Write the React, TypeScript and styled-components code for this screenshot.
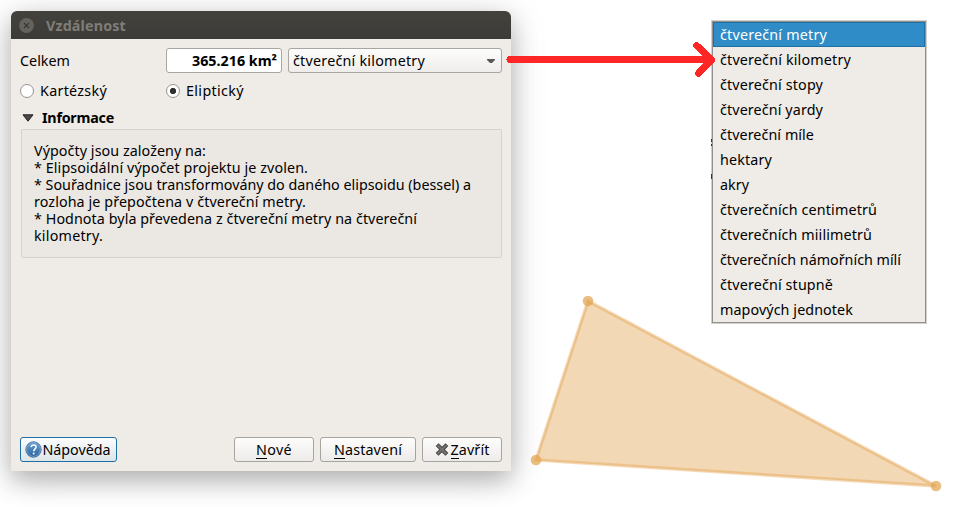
import React, { ReactNode, useLayoutEffect, useRef, useState } from "react";
import styled, { createGlobalStyle, css } from "styled-components";

const GlobalStyle = createGlobalStyle`
  * { box-sizing: border-box; }
  body { margin: 0; background: #fff; }
`;

const Desktop = styled.main`
  position: relative;
  width: 964px;
  height: 507px;
  overflow: hidden;
  background: #fff;
  color: #000;
  font: 14.3px/17px "Noto Sans", "Open Sans", sans-serif;
`;

const TextSpan = styled.span`
  display: inline-block;
  width: max-content;
  white-space: pre;
`;

/* Tracks a run of text so that it occupies the given advance width. */
function Text({ width, children }: { width: number; children: ReactNode }) {
  const ref = useRef<HTMLSpanElement>(null);
  const [spacing, setSpacing] = useState(0);
  useLayoutEffect(() => {
    const el = ref.current;
    if (!el) return;
    const natural = el.getBoundingClientRect().width;
    setSpacing((width - natural) / (el.textContent || " ").length);
  }, [width]);
  return (
    <TextSpan ref={ref} style={{ letterSpacing: spacing }}>
      {children}
    </TextSpan>
  );
}

const Window = styled.section`
  position: absolute;
  left: 11px;
  top: 11px;
  width: 500px;
  height: 460px;
  display: flex;
  flex-direction: column;
  border-radius: 6px 6px 0 0;
  background: #efebe6;
  box-shadow: 0 9px 26px rgba(0, 0, 0, 0.29), 0 4px 46px rgba(0, 0, 0, 0.08);
`;

const TitleBar = styled.header`
  height: 28px;
  display: flex;
  align-items: center;
  gap: 12px;
  padding: 1px 8px 0;
  border-radius: 6px 6px 0 0;
  background: linear-gradient(#43423d, #3c3b37);
  color: #807d78;
  font-weight: 700;

  svg { display: block; }
  span { margin-top: -1px; }
`;

const Body = styled.div`
  flex: 1;
  display: flex;
  flex-direction: column;
  padding: 9px 9px 9px;
`;

const FormRow = styled.div`
  display: grid;
  grid-template-columns: 146px 116px 220px;
  align-items: center;
  height: 25px;
`;

const fieldFrame = css`
  height: 25px;
  display: flex;
  align-items: center;
  border: 1px solid #a9a5a1;
  border-radius: 3px;
`;

const ValueField = styled.div`
  ${fieldFrame}
  justify-content: flex-end;
  padding-right: 4px;
  background: #fff;
  font-weight: 700;
`;

const Combo = styled.div`
  ${fieldFrame}
  width: 214px;
  margin-left: 6px;
  justify-content: space-between;
  padding: 0 6px 0 4px;
  background: linear-gradient(#fdfdfc, #efedeb);
`;

const RadioRow = styled.div`
  display: grid;
  grid-template-columns: 146px 1fr;
  margin-top: 9px;
  height: 17px;
`;

const RadioLabel = styled.div`
  display: flex;
  align-items: center;
  gap: 6px;
`;

const RadioDot = styled.span<{ $on?: boolean }>`
  width: 14px;
  height: 14px;
  border: 1px solid #989490;
  border-radius: 50%;
  background: ${(p) =>
    p.$on ? "radial-gradient(circle, #33312f 0 2.8px, #fff 3.5px)" : "#fff"};
`;

const GroupTitle = styled.div`
  display: flex;
  align-items: center;
  gap: 8px;
  height: 17px;
  margin: 10px 0 3px 2px;
  font-weight: 700;
`;

const GroupBox = styled.div`
  display: flex;
  flex-direction: column;
  height: 129px;
  margin-left: 1px;
  padding: 12px;
  border: 1px solid #d6d2ce;
  border-radius: 2px;
  background: #ebe7e2;
`;

const ButtonBar = styled.footer`
  display: flex;
  gap: 6px;
  margin-top: auto;
`;

const Button = styled.button<{ $width: number; $focused?: boolean }>`
  width: ${(p) => p.$width}px;
  height: 25px;
  display: flex;
  align-items: center;
  justify-content: center;
  gap: 1px;
  padding: 0;
  border: 1px solid ${(p) => (p.$focused ? "#1e6fa5" : "#a7a39f")};
  border-radius: 3px;
  background: ${(p) =>
    p.$focused ? "linear-gradient(#fcfcfc, #dce5e9)" : "linear-gradient(#fdfdfc, #edebe9)"};
  font: inherit;
  color: #000;
  ${(p) => p.$focused && "margin-right: auto; padding-right: 2px;"}
`;

const Mnemonic = styled.span`
  display: inline-block;
  height: 17px;
  line-height: 17px;
  box-shadow: 0 1px 0 #000;
`;

const Menu = styled.ul`
  position: absolute;
  left: 711px;
  top: 20px;
  width: 216px;
  height: 304px;
  margin: 0;
  padding: 0;
  list-style: none;
  border: 1px solid #d2d0cc;
  outline: 1px solid #92908c;
  outline-offset: -2px;
  background: #efebe6;
`;

const MenuItem = styled.li<{ $selected?: boolean }>`
  height: 25px;
  display: flex;
  align-items: center;
  margin: 0 1px;
  padding-left: 7px;

  &:first-child { margin-top: 1px; }

  ${(p) =>
    p.$selected &&
    css`
      background: #308cc6;
      box-shadow: inset 0 0 0 1px #1f71a5;
      color: #fff;
    `}
`;

const Overlay = styled.svg`
  position: absolute;
  inset: 0;
  pointer-events: none;
`;

const infoLines: [string, number][] = [
  ["Výpočty jsou založeny na:", 172],
  ["* Elipsoidální výpočet projektu je zvolen.", 274],
  ["* Souřadnice jsou transformovány do daného elipsoidu (bessel) a", 437],
  ["rozloha je přepočtena v čtvereční metry.", 272],
  ["* Hodnota byla převedena z čtvereční metry na čtvereční", 383],
  ["kilometry.", 69],
];

const units: [string, number][] = [
  ["čtvereční metry", 107],
  ["čtvereční kilometry", 131],
  ["čtvereční stopy", 103],
  ["čtvereční yardy", 103],
  ["čtvereční míle", 94],
  ["hektary", 52],
  ["akry", 29],
  ["čtverečních centimetrů", 157],
  ["čtverečních miilimetrů", 152],
  ["čtverečních námořních mílí", 181],
  ["čtvereční stupně", 113],
  ["mapových jednotek", 133],
];

function CloseIcon() {
  return (
    <svg width="15" height="15" viewBox="0 0 15 15">
      <circle cx="7.5" cy="7.5" r="7.4" fill="#65635e" />
      <path d="M5 5l5 5M10 5l-5 5" stroke="#393834" strokeWidth="1.2" />
    </svg>
  );
}

function HelpIcon() {
  return (
    <svg width="17" height="17" viewBox="0 0 17 17">
      <defs>
        <linearGradient id="help" x2="0" y2="1">
          <stop stopColor="#6aa0d0" />
          <stop offset="1" stopColor="#2c639d" />
        </linearGradient>
      </defs>
      <circle cx="8.5" cy="8.5" r="7.7" fill="url(#help)" stroke="#2a5a8e" strokeWidth=".8" />
      <circle cx="8.5" cy="8.5" r="6.9" fill="none" stroke="#9abedd" strokeWidth=".6" />
      <path d="M6 6.2C6.4 4.5 7.4 4 8.6 4c1.5 0 2.5.9 2.5 2.2 0 1.6-2.4 1.9-2.4 4" fill="none" stroke="#fff" strokeWidth="1.5" />
      <circle cx="8.7" cy="12.4" r="1" fill="#fff" />
    </svg>
  );
}

function CrossIcon() {
  return (
    <svg width="15" height="16" viewBox="0 0 15 16">
      <path d="M3.500 4l7 7M10.500 4l-7 7" stroke="#464646" strokeWidth="4" strokeLinecap="square" />
      <path d="M3.300 3.800l7.400 7.400M10.700 3.800l-7.400 7.400" stroke="#747474" strokeWidth="2" strokeLinecap="square" />
    </svg>
  );
}

export default function App() {
  return (
    <>
      <GlobalStyle />
      <Desktop>
        <Window>
          <TitleBar>
            <CloseIcon />
            <Text width={80}>Vzdálenost</Text>
          </TitleBar>
          <Body>
            <FormRow>
              <Text width={50}>Celkem</Text>
              <ValueField>
                <Text width={85}>365.216 km²</Text>
              </ValueField>
              <Combo>
                <Text width={132}>čtvereční kilometry</Text>
                <svg width="8" height="4" viewBox="0 0 8 4">
                  <path d="M0 0h8v1L5 4H3L0 1z" fill="#5b5957" />
                </svg>
              </Combo>
            </FormRow>
            <RadioRow>
              <RadioLabel>
                <RadioDot />
                <Text width={67}>Kartézský</Text>
              </RadioLabel>
              <RadioLabel>
                <RadioDot $on />
                <Text width={58}>Eliptický</Text>
              </RadioLabel>
            </RadioRow>
            <GroupTitle>
              <svg width="12" height="8" viewBox="0 0 12 8">
                <path d="M1 .8h10L6 7.2z" fill="#4b4947" stroke="#252423" />
              </svg>
              <Text width={72}>Informace</Text>
            </GroupTitle>
            <GroupBox>
              {infoLines.map(([line, width]) => (
                <Text key={line} width={width}>{line}</Text>
              ))}
            </GroupBox>
            <ButtonBar>
              <Button $width={97} $focused>
                <HelpIcon />
                <Text width={68}>Nápověda</Text>
              </Button>
              <Button $width={80}>
                <Text width={36}><Mnemonic>N</Mnemonic>ové</Text>
              </Button>
              <Button $width={96}>
                <Text width={68}><Mnemonic>N</Mnemonic>astavení</Text>
              </Button>
              <Button $width={80}>
                <CrossIcon />
                <Text width={39}><Mnemonic>Z</Mnemonic>avřít</Text>
              </Button>
            </ButtonBar>
          </Body>
        </Window>
        <Overlay width="964" height="507" viewBox="0 0 964 507">
          <path d="M588 301L536 460L936 486Z" fill="#e2a85a" fillOpacity=".45" />
          <path d="M588 301L536 460L936 486Z" fill="none" stroke="#e6a755" strokeOpacity=".42" strokeWidth="3.4" />
          <path d="M588 301L536 460L936 486Z" fill="none" stroke="#e0a555" strokeOpacity=".3" strokeWidth="1.2" />
          <g fill="#e2a550" fillOpacity=".72">
            <circle cx="588" cy="301" r="5.3" />
            <circle cx="536" cy="460" r="5.3" />
            <circle cx="936" cy="486" r="5.3" />
          </g>
        </Overlay>
        <Menu>
          {units.map(([name, width], i) => (
            <MenuItem key={name} $selected={i === 0}>
              <Text width={width}>{name}</Text>
            </MenuItem>
          ))}
        </Menu>
        <Overlay width="964" height="507" viewBox="0 0 964 507">
          <path d="M711 139h1v3h-1zM711 144h1v2h-1zM711 174h1v5h-1z" fill="#333" />
          <path
            d="M510 59.500H711.500M696.500 45.500L711.500 59.500L698.500 73.500"
            fill="none"
            stroke="#ff2626"
            strokeWidth="7"
            strokeLinecap="round"
            strokeLinejoin="round"
            shapeRendering="crispEdges"
          />
        </Overlay>
      </Desktop>
    </>
  );
}
